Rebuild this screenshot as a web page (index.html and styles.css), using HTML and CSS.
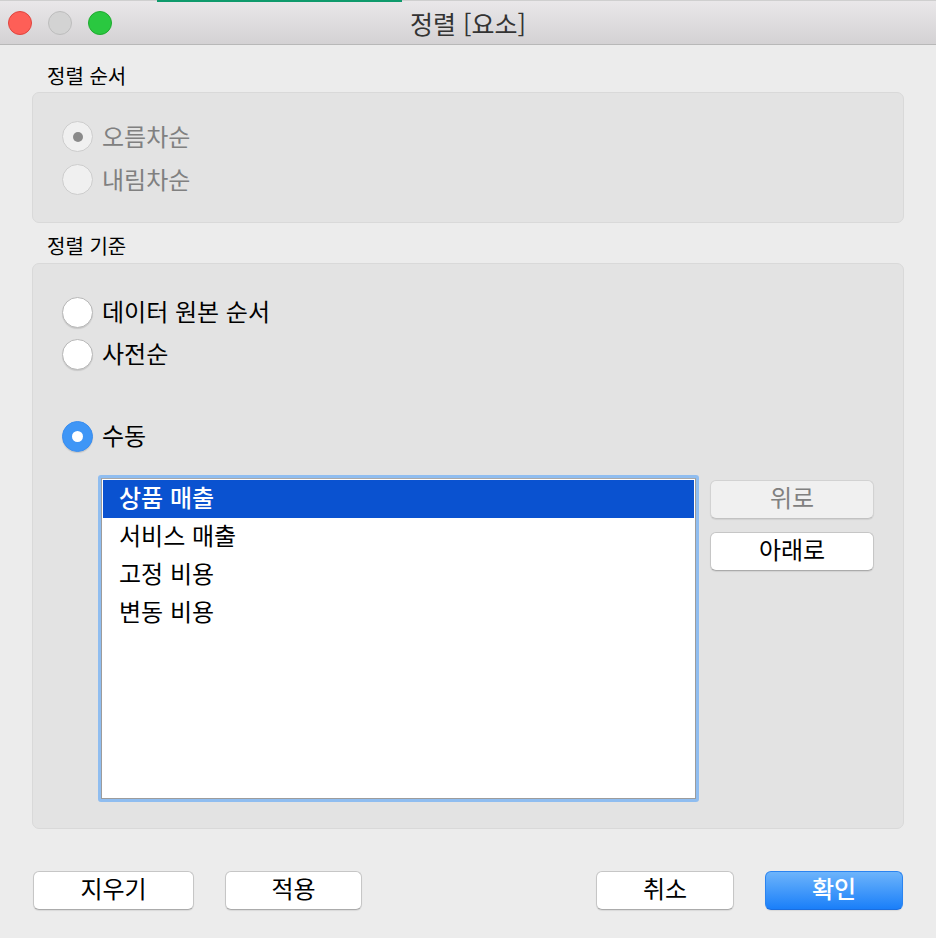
FILE: index.html
```html
<!DOCTYPE html>
<html lang="ko">
<head>
<meta charset="utf-8">
<title>정렬 [요소]</title>
<link rel="stylesheet" href="styles.css">
</head>
<body>
<div class="window">
  <div class="titlebar">
    <div class="lights">
      <span class="light red"></span>
      <span class="light gray"></span>
      <span class="light green"></span>
    </div>
    <div class="title">정렬 [요소]</div>
  </div>

  <div class="content">
    <div class="group-label">정렬 순서</div>
    <div class="group group-order">
      <div class="radio-row disabled">
        <span class="radio radio-disabled checked-gray"></span>
        <span class="radio-text">오름차순</span>
      </div>
      <div class="radio-row disabled">
        <span class="radio radio-disabled"></span>
        <span class="radio-text">내림차순</span>
      </div>
    </div>

    <div class="group-label second">정렬 기준</div>
    <div class="group group-basis">
      <div class="radio-row">
        <span class="radio"></span>
        <span class="radio-text">데이터 원본 순서</span>
      </div>
      <div class="radio-row">
        <span class="radio"></span>
        <span class="radio-text">사전순</span>
      </div>
      <div class="radio-row manual">
        <span class="radio radio-on"></span>
        <span class="radio-text">수동</span>
      </div>

      <div class="manual-area">
        <div class="listbox">
          <div class="list-inner">
            <div class="item selected">상품 매출</div>
            <div class="item">서비스 매출</div>
            <div class="item">고정 비용</div>
            <div class="item">변동 비용</div>
          </div>
        </div>
        <div class="side-buttons">
          <button class="btn btn-disabled">위로</button>
          <button class="btn">아래로</button>
        </div>
      </div>
    </div>

    <div class="footer">
      <div class="footer-left">
        <button class="btn btn-clear">지우기</button>
        <button class="btn btn-apply">적용</button>
      </div>
      <div class="footer-right">
        <button class="btn btn-cancel">취소</button>
        <button class="btn btn-primary">확인</button>
      </div>
    </div>
  </div>
</div>
</body>
</html>
```

FILE: styles.css
```css
* { box-sizing: border-box; }

html, body {
  margin: 0;
  padding: 0;
  background: #ececec;
}

body {
  width: 936px;
  height: 938px;
  overflow: hidden;
  font-family: "Noto Sans CJK KR", "Noto Sans", "Liberation Sans", sans-serif;
  color: #000;
}

.window {
  width: 936px;
  height: 938px;
  background: #ececec;
}

.titlebar {
  position: relative;
  height: 45px;
  background: linear-gradient(#e9e7e9, #d4d2d4);
  border-bottom: 1px solid #b8b8b8;
  border-top: 1px solid #cfcfcf;
  display: flex;
  align-items: center;
}

.titlebar::before {
  content: "";
  position: absolute;
  top: -1px;
  left: 157px;
  width: 245px;
  height: 2px;
  background: #0f9a6c;
}

.lights {
  position: absolute;
  left: 8px;
  top: 10px;
  display: flex;
  gap: 16px;
}

.light {
  width: 24px;
  height: 24px;
  border-radius: 50%;
  display: block;
}

.red { background: #fe5f57; border: 1px solid #e0443e; }
.gray { background: #d3d3d3; border: 1px solid #bdbdbd; }
.green { background: #2ac840; border: 1px solid #1faa2f; }

.title {
  flex: 1;
  text-align: center;
  font-size: 25px;
  color: #333;
  line-height: 44px;
}

.content {
  padding: 0 32px;
}

.group-label {
  font-size: 20px;
  line-height: 24px;
  margin: 19px 0 4px 15px;
  color: #000;
}

.group-label.second {
  margin-top: 11px;
  margin-bottom: 5px;
}

.group {
  background: #e3e3e3;
  border: 1px solid #d9d9d9;
  border-radius: 7px;
}

.group-order {
  height: 131px;
  padding: 22px 0 0 29px;
}

.group-basis {
  height: 566px;
  padding: 27px 0 0 29px;
}

.radio-row {
  display: flex;
  align-items: center;
  height: 43px;
  gap: 9px;
}

.group-basis .radio-row { height: 42px; }

.radio-row.manual { margin-top: 40px; }

.radio {
  width: 31px;
  height: 31px;
  border-radius: 50%;
  background: #fff;
  border: 1px solid #b8b8b8;
  box-shadow: 0 1px 1px rgba(0,0,0,0.12);
  display: flex;
  align-items: center;
  justify-content: center;
  flex: none;
}

.radio-disabled {
  background: #f0f0f0;
  border-color: #cdcdcd;
  box-shadow: none;
}

.checked-gray::after {
  content: "";
  width: 10px;
  height: 10px;
  border-radius: 50%;
  background: #8a8a8a;
}

.radio-on {
  background: #3f96f6;
  border-color: #3a8ef0;
}

.radio-on::after {
  content: "";
  width: 11px;
  height: 11px;
  border-radius: 50%;
  background: #fff;
}

.radio-text {
  font-size: 24px;
  line-height: 30px;
  color: #000;
  margin-top: -2px;
}

.disabled .radio-text { color: #808080; }

.manual-area {
  display: flex;
  align-items: flex-start;
  gap: 11px;
  margin-top: 18px;
  margin-left: 36px;
}

.listbox {
  width: 601px;
  height: 327px;
  border: 3px solid #8fbdf0;
  border-radius: 3px;
  background: #8fbdf0;
}

.list-inner {
  height: 100%;
  background: #fff;
  border: 1px solid #9c9c9c;
  border-top-color: #a8a8a8;
  padding: 1px;
}

.item {
  height: 38px;
  line-height: 34px;
  font-size: 24px;
  padding-left: 16px;
  color: #000;
}

.item.selected {
  background: #0a52d0;
  color: #fff;
  font-weight: 500;
}

.side-buttons {
  display: flex;
  flex-direction: column;
  gap: 13px;
  margin-top: 5px;
}

.btn {
  font-family: "Noto Sans CJK KR", "Noto Sans", "Liberation Sans", sans-serif;
  font-size: 24px;
  height: 39px;
  line-height: 30px;
  padding: 0 0 5px 0;
  background: #fff;
  color: #000;
  border: 1px solid #c6c6c6;
  border-bottom-color: #ababab;
  border-radius: 6px;
  box-shadow: 0 1px 1px rgba(0,0,0,0.08);
  text-align: center;
}

.side-buttons .btn { width: 164px; }

.btn-disabled {
  background: #f0f0f0;
  color: #808080;
  border-color: #d2d2d2;
  border-bottom-color: #c2c2c2;
}

.footer {
  display: flex;
  justify-content: space-between;
  margin-top: 42px;
  padding-left: 1px;
  padding-right: 1px;
}

.footer-left, .footer-right {
  display: flex;
  gap: 31px;
}

.btn-clear { width: 161px; }
.btn-apply { width: 137px; }
.btn-cancel { width: 138px; }
.btn-primary {
  width: 138px;
  color: #fff;
  font-weight: 500;
  background: linear-gradient(#6db4fb, #1a7ff9);
  border: 1px solid #2b84f0;
  border-bottom-color: #1a6ee0;
}
```
